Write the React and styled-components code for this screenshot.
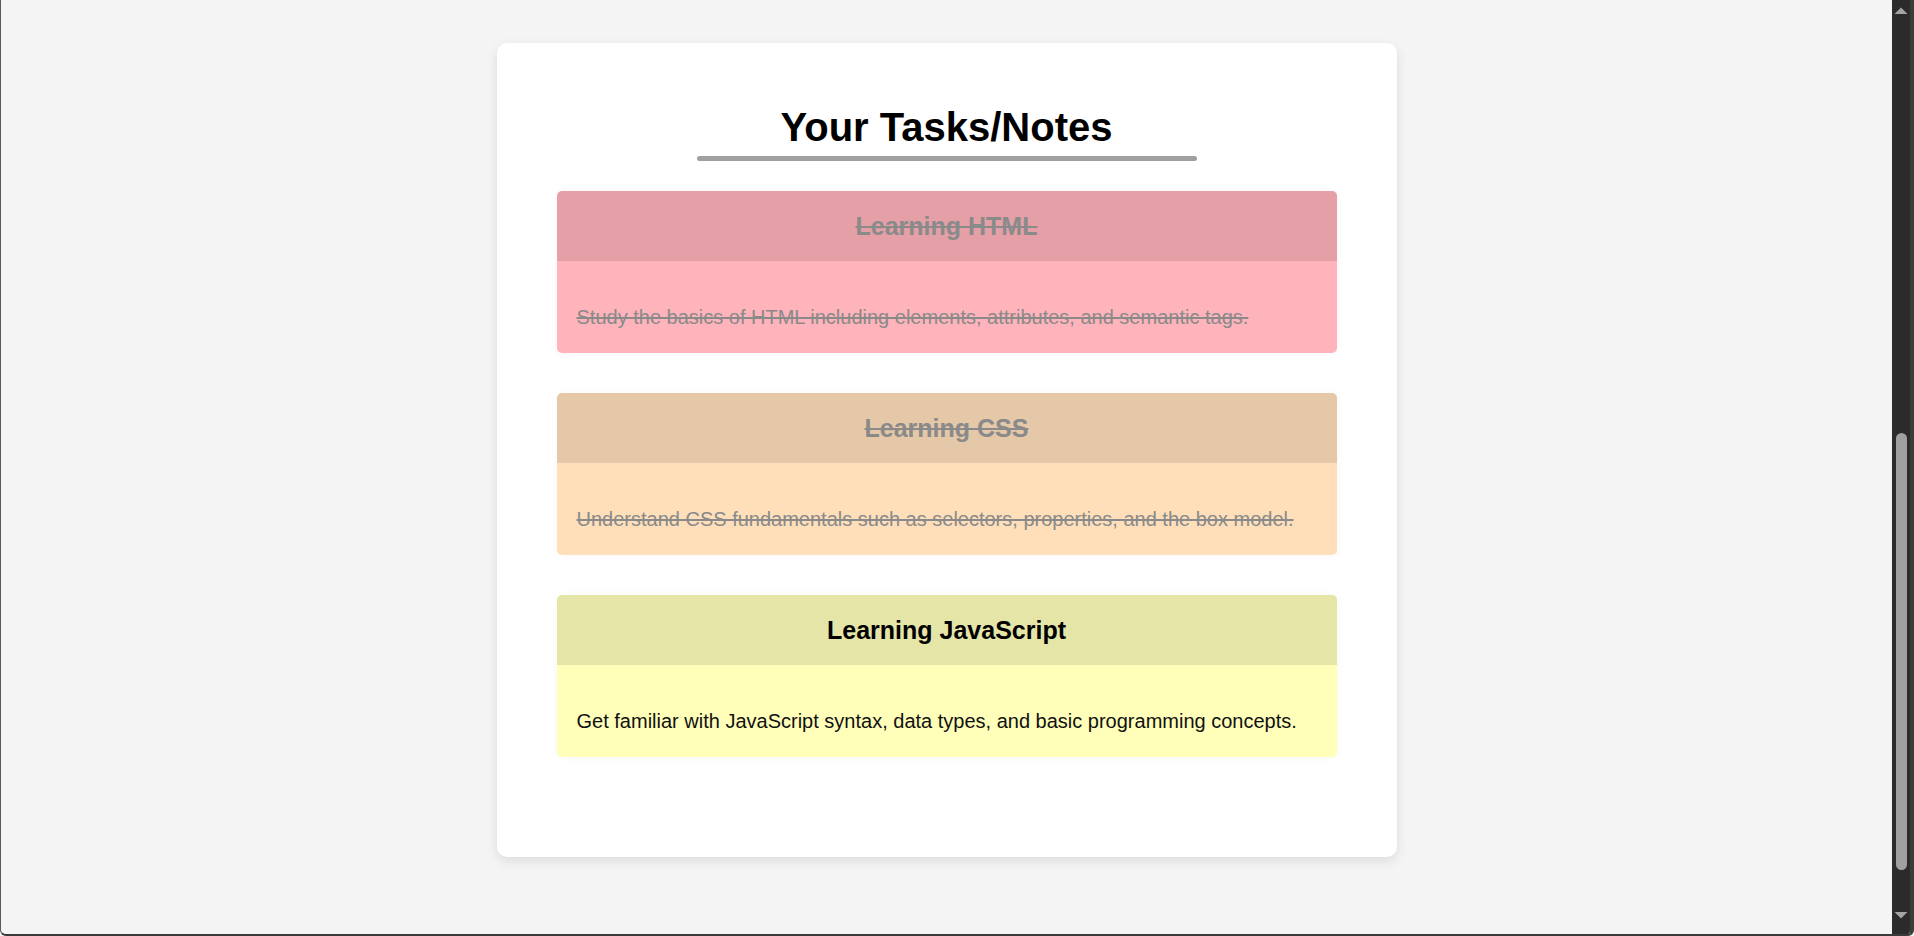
import React, { useState } from 'react';
import styled, { createGlobalStyle } from 'styled-components';

const GlobalStyle = createGlobalStyle`
  html, body {
    margin: 0;
    padding: 0;
    height: 100%;
    overflow: hidden;
  }
  body {
    font-family: "Liberation Sans", Arial, Helvetica, sans-serif;
    background: #f4f4f4;
  }
`;

const initialTasks = [
  {
    id: 1,
    title: 'Learning HTML',
    text: 'Study the basics of HTML including elements, attributes, and semantic tags.',
    color: '#ffb3ba',
    done: true,
  },
  {
    id: 2,
    title: 'Learning CSS',
    text: 'Understand CSS fundamentals such as selectors, properties, and the box model.',
    color: '#ffdfba',
    done: true,
  },
  {
    id: 3,
    title: 'Learning JavaScript',
    text: 'Get familiar with JavaScript syntax, data types, and basic programming concepts.',
    color: '#ffffba',
    done: false,
  },
];

function App() {
  const [tasks, changeTasks] = useState(initialTasks);

  const toggleTask = (id) => {
    changeTasks(tasks.map(t => (t.id === id ? { ...t, done: !t.done } : t)));
  };

  return (
    <Frame>
      <GlobalStyle />
      <Page>
        <MainBlock>
          <Title>Your Tasks/Notes</Title>
          <TitleBar />
          <ListOfTasks>
            {tasks.map(item => (
              <Task key={item.id} color={item.color} onClick={() => toggleTask(item.id)}>
                <TaskHeader done={item.done}>{item.title}</TaskHeader>
                <TaskBody done={item.done}>{item.text}</TaskBody>
              </Task>
            ))}
          </ListOfTasks>
        </MainBlock>
      </Page>
      <ScrollTrack>
        <Arrow viewBox="0 0 14 7">
          <path d="M0.5 7 L7 0.5 L13.5 7 Z" fill="#a3a3a3" />
        </Arrow>
        <ThumbArea>
          <Thumb />
        </ThumbArea>
        <Arrow viewBox="0 0 14 7">
          <path d="M0.5 0 L7 6.5 L13.5 0 Z" fill="#a3a3a3" />
        </Arrow>
      </ScrollTrack>
    </Frame>
  );
}

const Frame = styled.div`
  height: 100vh;
  display: flex;
  box-sizing: border-box;
  border-left: 1px solid #5a5a5a;
  border-bottom: 2px solid #3a3a3a;
  border-right: 4px solid #3c3c3c;
  border-radius: 0 0 6px 6px;
  overflow: hidden;
  background: #f4f4f4;
`;

const Page = styled.div`
  flex: 1;
  padding-top: 43px;
`;

const MainBlock = styled.div`
  width: 900px;
  box-sizing: border-box;
  margin: 0 auto;
  padding: 60px;
  background: #ffffff;
  border-radius: 10px;
  box-shadow: 0 4px 12px rgba(0, 0, 0, 0.1);
`;

const Title = styled.h1`
  margin: 0;
  text-align: center;
  font-size: 40px;
  line-height: 48px;
  font-weight: 700;
  color: #000;
`;

const TitleBar = styled.div`
  width: 500px;
  height: 5px;
  margin: 5px auto 0;
  border-radius: 3px;
  background: #a0a0a0;
`;

const ListOfTasks = styled.div`
  margin-top: 30px;
  display: flex;
  flex-direction: column;
  gap: 40px;
  margin-bottom: 40px;
`;

const Task = styled.div`
  background: ${({ color }) => color};
  border-radius: 5px;
  overflow: hidden;
  box-shadow: 0 0 8px rgba(0, 0, 0, 0.04);
  cursor: pointer;
`;

const doneStyle = `
  color: #8a8a8a;
  text-decoration: line-through;
`;

const TaskHeader = styled.div`
  background: rgba(0, 0, 0, 0.1);
  padding: 15px 20px;
  text-align: center;
  font-size: 25px;
  line-height: 40px;
  font-weight: 700;
  color: #000;
  ${({ done }) => done && doneStyle}
`;

const TaskBody = styled.div`
  padding: 40px 20px 20px;
  font-size: 20px;
  line-height: 32px;
  color: #111;
  ${({ done }) => done && doneStyle}
`;

const ScrollTrack = styled.div`
  width: 18px;
  flex: none;
  background: #2b2b2b;
  display: flex;
  flex-direction: column;
  align-items: center;
  padding: 7px 0 15px;
  box-sizing: border-box;
`;

const Arrow = styled.svg`
  width: 14px;
  height: 7px;
  flex: none;
`;

const ThumbArea = styled.div`
  flex: 1;
  width: 100%;
  display: flex;
  flex-direction: column;
  justify-content: flex-end;
  align-items: center;
  padding-bottom: 42px;
`;

const Thumb = styled.div`
  width: 11px;
  height: 437px;
  border-radius: 6px;
  background: #a0a0a0;
`;

export default App;
